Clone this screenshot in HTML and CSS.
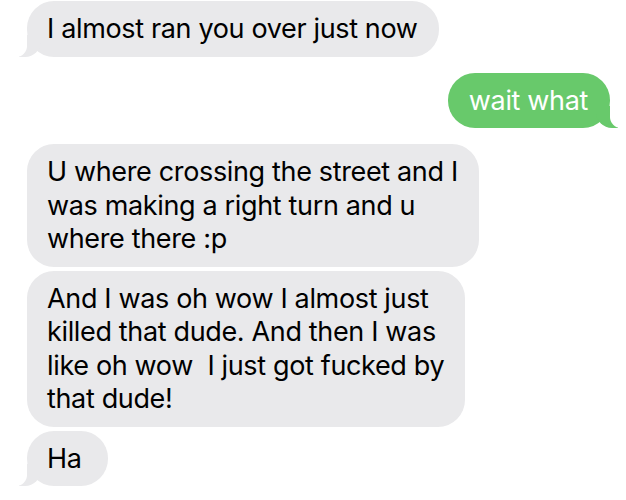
FILE: index.html
```html
<!DOCTYPE html>
<html>
<head>
<meta charset="utf-8">
<link rel="stylesheet" href="styles.css">
</head>
<body>
<div class="thread">
  <div class="msg in tail">I almost ran you over just now</div>
  <div class="msg out tail">wait what</div>
  <div class="group">
    <div class="msg in">U where crossing the street and I<br>was making a right turn and u<br>where there :p</div>
    <div class="msg in">And I was oh wow I almost just<br>killed that dude. And then I was<br>like oh wow&nbsp; I just got fucked by<br>that dude!</div>
    <div class="msg in tail">Ha</div>
  </div>
</div>
</body>
</html>
```
FILE: styles.css
```css
html, body {
  margin: 0;
  padding: 0;
  background: #ffffff;
}
.thread {
  width: 626px;
  height: 500px;
  box-sizing: border-box;
  padding: 1px 16px 0 27px;
  display: flex;
  flex-direction: column;
  gap: 16px;
  font-family: "Inter", "Liberation Sans", sans-serif;
  font-size: 27px;
  letter-spacing: -0.35px;
  line-height: 33.5px;
  overflow: hidden;
}
.group {
  display: flex;
  flex-direction: column;
  gap: 4px;
}
.msg {
  position: relative;
  box-sizing: border-box;
  white-space: nowrap;
  min-width: 81px;
  padding: 11px 21px 11px 20px;
  border-radius: 27px;
  width: fit-content;
}
.in {
  align-self: flex-start;
  background: #e9e9eb;
  color: #000000;
}
.out {
  align-self: flex-end;
  background: #68c96b;
  color: #ffffff;
  padding: 11px 22px 11px 21px;
}
.in.tail::before {
  content: "";
  position: absolute;
  bottom: 0;
  left: -8px;
  width: 22px;
  height: 22px;
  background: #e9e9eb;
  border-bottom-right-radius: 16px;
}
.in.tail::after {
  content: "";
  position: absolute;
  bottom: 0;
  left: -11px;
  width: 11px;
  height: 22px;
  background: #ffffff;
  border-bottom-right-radius: 11px;
}
.out.tail::before {
  content: "";
  position: absolute;
  bottom: 0;
  right: -8px;
  width: 22px;
  height: 22px;
  background: #68c96b;
  border-bottom-left-radius: 16px;
}
.out.tail::after {
  content: "";
  position: absolute;
  bottom: 0;
  right: -11px;
  width: 11px;
  height: 22px;
  background: #ffffff;
  border-bottom-left-radius: 11px;
}
```
